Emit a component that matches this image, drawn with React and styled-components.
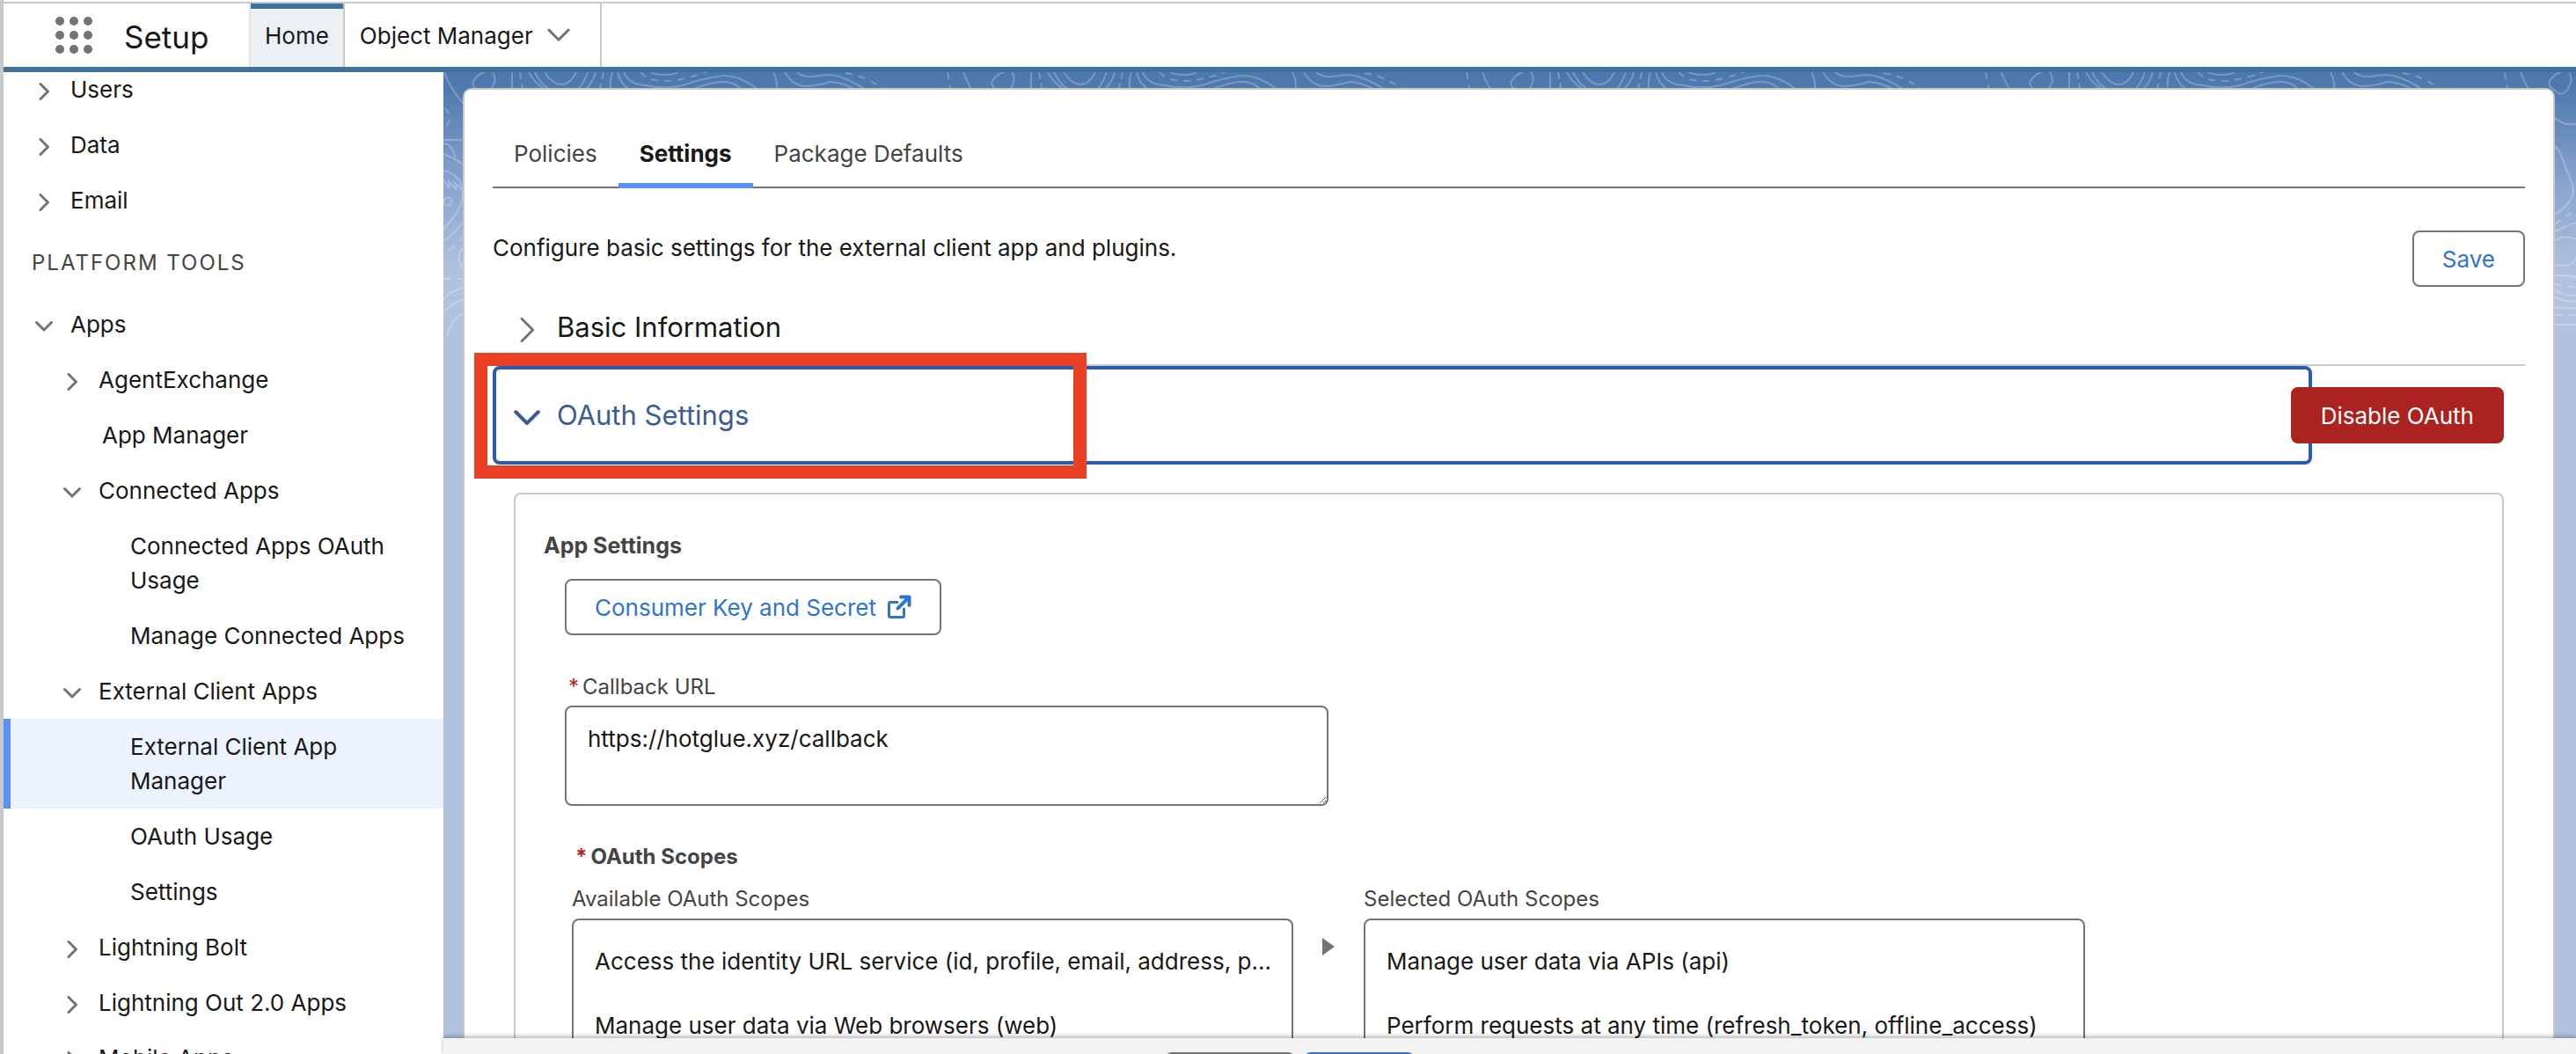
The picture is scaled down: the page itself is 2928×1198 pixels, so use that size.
import React from "react";
import styled, { createGlobalStyle, css } from "styled-components";

const GlobalStyle = createGlobalStyle`
  *, *::before, *::after { box-sizing: border-box; }
  body { margin: 0; background: #fff; }
  button, textarea { font: inherit; color: inherit; }
  ul { list-style: none; margin: 0; padding: 0; }
  h1, h2, h3, p { margin: 0; font-weight: 400; }
`;

const color = {
  text: "#181818",
  muted: "#444444",
  icon: "#747474",
  line: "#c9c9c9",
  header: "#3e729b",
  accent: "#5892f5",
  link: "#2f74d0",
  focus: "#2a5ca8",
};

const Shell = styled.div`
  display: flex;
  flex-direction: column;
  height: 100vh;
  overflow: hidden;
  padding-top: 2px;
  border-left: 4px solid ${color.line};
  font-family: Inter, "Liberation Sans", sans-serif;
  font-size: 26px;
  line-height: 39px;
  color: ${color.text};
`;

const Header = styled.header`
  display: flex;
  flex: none;
  height: 80px;
  border-top: 2px solid ${color.line};
  border-bottom: 6px solid ${color.header};
`;

const Launcher = styled.button`
  display: flex;
  align-items: center;
  padding: 0 36px 0 59px;
  border: 0;
  background: none;
`;

const AppName = styled.h1`
  width: 142px;
  font-size: 35px;
  line-height: 76px;
`;

const NavItem = styled.a`
  display: flex;
  align-items: center;
  gap: 16px;
  padding: 0 34px 0 17px;
  border-right: 2px solid ${color.line};
  color: inherit;
  text-decoration: none;
  ${(p) =>
    p.$active &&
    css`
      padding: 0 16px;
      border-left: 2px solid #e0e4e8;
      background: #ebf0f4;
      box-shadow: inset 0 6px ${color.header};
    `}
`;

const Body = styled.div`
  display: flex;
  flex: 1;
  min-height: 0;
`;

const Sidebar = styled.nav`
  flex: none;
  width: 500px;
  overflow: hidden;
  background: #fff;
`;

const Tree = styled.ul`
  margin-top: -12px;
`;

const TreeHeading = styled.li`
  padding: 20px 32px 19px;
  font-size: 24px;
  letter-spacing: 2px;
  color: ${color.muted};
`;

const TreeItem = styled.li`
  display: flex;
  padding: 12px 40px 12px ${(p) => p.$indent}px;
  background: ${(p) => (p.$selected ? "#ecf3fe" : "transparent")};
  box-shadow: ${(p) => (p.$selected ? `inset 8px 0 ${color.accent}` : "none")};
`;

const Toggle = styled.button`
  display: flex;
  align-items: center;
  justify-content: center;
  flex: none;
  width: 20px;
  height: 39px;
  margin-right: 20px;
  padding: 4px 0 0;
  border: 0;
  background: none;
`;

const TreeLink = styled.a`
  color: inherit;
  text-decoration: none;
`;

const Main = styled.main`
  position: relative;
  flex: 1;
  min-width: 0;
  display: flex;
  flex-direction: column;
  background: linear-gradient(#4d77ad 0, #507aaf 20px, #8aa5ce 130px, #b1c2df 230px);
`;

const Contours = styled.svg`
  position: absolute;
  inset: 0;
  width: 100%;
  height: 320px;
`;

const Scroller = styled.div`
  position: relative;
  flex: 1;
  min-height: 0;
  overflow: hidden;
  padding: 18px 24px 0 22px;
`;

const Card = styled.section`
  min-height: 1200px;
  padding: 40px 32px;
  border: 2px solid ${color.line};
  border-radius: 10px;
  background: #fff;
`;

const Tabs = styled.div`
  display: flex;
  border-bottom: 2px solid ${color.icon};
`;

const Tab = styled.button`
  margin-bottom: -2px;
  padding: 13px 24px 14px;
  border: 0;
  border-bottom: 6px solid ${(p) => (p.$active ? color.accent : "transparent")};
  background: none;
  color: ${(p) => (p.$active ? color.text : color.muted)};
  font-weight: ${(p) => (p.$active ? 700 : 400)};
`;

const Intro = styled.div`
  display: flex;
  justify-content: space-between;
  padding: 48px 0 22px;
`;

const Button = styled.button`
  display: inline-flex;
  align-items: center;
  flex: none;
  gap: 12px;
  height: 64px;
  padding: 0 32px;
  border: 2px solid ${color.icon};
  border-radius: 8px;
  background: #fff;
  color: ${color.link};
`;

const DangerButton = styled(Button)`
  margin-left: -24px;
  border-color: #aa2320;
  background: #aa2320;
  color: #fff;
`;

const SectionToggle = styled.button`
  display: flex;
  align-items: center;
  gap: 19px;
  padding: 0 24px;
  border: 0;
  border-radius: 8px;
  background: none;
  font-size: 31px;
  line-height: 48px;

  svg {
    margin-top: 6px;
  }

  ${(p) =>
    p.$focused &&
    css`
      flex: 1;
      height: 112px;
      padding: 0 20px;
      border: 4px solid ${color.focus};
      color: #3a5b96;
    `}
`;

const BasicRow = styled.div`
  padding-bottom: 18px;
  border-bottom: 2px solid ${color.line};
`;

const OauthRow = styled.div`
  position: relative;
  display: flex;
  align-items: center;
  padding-right: 24px;
`;

const Highlight = styled.div`
  position: absolute;
  top: -15px;
  left: -21px;
  width: 696px;
  height: 143px;
  border: 15px solid #ea4026;
  pointer-events: none;
`;

const Panel = styled.div`
  margin: 32px 24px 0;
  padding: 38px 32px;
  min-height: 720px;
  border: 2px solid ${color.line};
  border-radius: 8px;
`;

const PanelTitle = styled.h2`
  font-size: 25px;
  font-weight: 700;
  line-height: 40px;
  color: ${color.muted};
`;

const Fields = styled.div`
  padding: 18px 24px 0;
`;

const FieldLabel = styled.label`
  display: block;
  padding: 0 0 3px 4px;
  font-size: 24px;
  line-height: 36px;
  color: ${color.muted};
`;

const Required = styled.abbr`
  margin-right: 4px;
  color: #b3261e;
  text-decoration: none;
`;

const CallbackField = styled.div`
  margin-top: 41px;
`;

const UrlBox = styled.textarea`
  display: block;
  width: 100%;
  max-width: 868px;
  height: 114px;
  padding: 16px 24px;
  border: 2px solid ${color.icon};
  border-radius: 8px;
  background: #fff;
  outline: 0;
`;

const ScopesTitle = styled.h3`
  margin-top: 40px;
  padding-left: 12px;
  font-size: 24px;
  font-weight: 700;
  line-height: 36px;
  color: ${color.muted};
`;

const DuelingList = styled.div`
  display: grid;
  grid-template-columns: 820px 80px 820px;
  margin-top: 12px;
  padding-left: 8px;
`;

const ListLabel = styled.div`
  padding-bottom: 4px;
  font-size: 24px;
  line-height: 36px;
  color: ${color.muted};
`;

const ListBox = styled.ul`
  height: 400px;
  padding-top: 10px;
  border: 2px solid ${color.icon};
  border-radius: 8px;
`;

const Option = styled.li`
  padding: 17px 20px 17px 24px;
  overflow: hidden;
  white-space: nowrap;
  text-overflow: ellipsis;
`;

const MoveButton = styled.button`
  justify-self: center;
  align-self: start;
  display: flex;
  margin-top: 62px;
  padding: 0;
  border: 0;
  background: none;
`;

const Footer = styled.footer`
  position: relative;
  display: flex;
  justify-content: center;
  align-items: flex-start;
  gap: 10px;
  flex: none;
  height: 18px;
  padding: 16px 500px 0 0;
  background: #f3f3f3;
  box-shadow: 0 -2px 5px rgba(0, 0, 0, 0.3);
`;

const FooterButton = styled(Button)`
  width: ${(p) => (p.$primary ? 126 : 148)}px;
  padding: 0;
  justify-content: center;
  border-color: ${(p) => (p.$primary ? color.link : color.icon)};
  background: ${(p) => (p.$primary ? color.link : "#fff")};
`;

function Chevron({ open, size = 20, width = 3, stroke = color.icon }) {
  return (
    <svg
      width={size}
      height={size}
      viewBox="0 0 20 20"
      fill="none"
      stroke={stroke}
      strokeWidth={(width * 20) / size}
      strokeLinecap="round"
      strokeLinejoin="round"
      aria-hidden="true"
    >
      <path d={open ? "M1.5 5.5 L10 14 L18.5 5.5" : "M6 1.5 L14.5 10 L6 18.5"} />
    </svg>
  );
}

function Waffle() {
  const steps = [5, 21, 37];
  return (
    <svg width="42" height="42" fill={color.icon} aria-hidden="true">
      {steps.map((y) => steps.map((x) => <circle key={`${x}-${y}`} cx={x} cy={y} r="5" />))}
    </svg>
  );
}

function NewWindow() {
  return (
    <svg width="28" height="28" viewBox="0 0 28 28" fill="none" stroke={color.link} strokeWidth="3" aria-hidden="true">
      <path d="M12 8.500 H4 Q2.500 8.500 2.500 10 V24 Q2.500 25.500 4 25.500 H18 Q19.500 25.500 19.500 24 V16" strokeLinecap="round" />
      <path d="M12.500 15.500 L24 4" strokeWidth="4" strokeLinecap="round" />
      <path d="M16 2.500 H25.500 V12" strokeWidth="4" strokeLinecap="round" strokeLinejoin="round" />
    </svg>
  );
}

function ContourLines() {
  return (
    <Contours aria-hidden="true">
      <defs>
        <pattern id="contours" width="590" height="320" patternUnits="userSpaceOnUse">
          <g fill="none" stroke="#fff" strokeOpacity="0.24" strokeWidth="2">
            <path d="M44 1 Q51 -3 56 0 Q60 6 58 12 Q53 25 46 25 Q41 22 36 18 Q32 14 34 10 Q38 4 44 1 Z" />
            <path d="M1 0 Q6 16 22 35 Q40 56 53 59 Q60 60 70 58" />
            <path d="M40 84 Q47 91 51 105 L60 128 Q63 138 56 148 Q50 155 40 162" />
            <path d="M40 181 Q52 175 64 171 M40 191 Q52 184 64 190 M64 211 Q60 221 50 220 L40 219" />
            <path d="M40 231 Q54 231 64 233 M40 248 Q50 254 64 254 M40 256 Q50 261 64 261 M40 267 L64 269 M40 287 H64" />
            <path d="M40 173 Q52 164 64 157 M40 241 L64 245 M40 276 H64" strokeDasharray="8 7" />
            <path d="M1 41 Q8 46 7 53 Q6 60 1 63 M0 235 H24" strokeDasharray="8 7" />
            <path d="M0 77 H24 M0 81 Q11 82 13 97 M0 93 Q14 98 24 107" />
            <path d="M0 112 Q22 116 22 141 Q18 162 0 178 M0 122 L7 132 L6 124 L15 134 L13 126 L22 135" />
            <circle cx="5" cy="147" r="4.500" />
            <path d="M24 168 Q14 183 0 192 M24 198 Q12 210 22 222 M24 245 Q10 247 0 258 M24 258 Q10 262 0 273 M24 274 Q8 280 4 300" />
            <path d="M24 187 Q12 198 2 206" strokeDasharray="8 7" />
            <path d="M78 0 V20 M97 0 Q103 12 116 20 M104 0 Q109 12 121 20 M115 0 Q124 14 134 14 Q144 14 151 0" />
            <path d="M164 0 Q160 12 153 20 M173 0 Q170 12 161 20 M192 0 Q189 8 190 20 M198 0 Q200 12 212 20" />
            <path d="M87 0 L90 18 M182 0 L178 18" strokeDasharray="8 5" />
            <path d="M205 0 Q210 14 230 15 Q250 20 272 15 Q298 6 318 4 Q338 4 358 20" />
            <path d="M236 0 Q240 3 252 3 Q262 3 266 0 M282 20 Q306 10 321 11 Q332 12 339 20" />
            <path d="M224 0 Q232 10 252 10 Q272 10 300 -1" strokeDasharray="8 7" />
            <path d="M375 0 Q380 10 379 20 M388 0 Q396 14 409 16 Q424 16 440 11 Q456 12 468 20" />
            <path d="M402 0 Q408 6 421 5 Q434 2 446 4 Q462 8 480 20" />
            <path d="M457 1 Q478 4 500 19 M573 0 L576 18" strokeDasharray="8 7" />
          </g>
        </pattern>
      </defs>
      <rect width="100%" height="320" fill="url(#contours)" />
    </Contours>
  );
}

const topItems = [{ label: "Users" }, { label: "Data" }, { label: "Email" }];

const platformItems = [
  { label: "Apps", open: true },
  { label: "AgentExchange", level: 1 },
  { label: "App Manager", level: 2 },
  { label: "Connected Apps", level: 1, open: true },
  { label: "Connected Apps OAuth Usage", level: 3 },
  { label: "Manage Connected Apps", level: 3 },
  { label: "External Client Apps", level: 1, open: true },
  { label: "External Client App Manager", level: 3, selected: true },
  { label: "OAuth Usage", level: 3 },
  { label: "Settings", level: 3 },
  { label: "Lightning Bolt", level: 1 },
  { label: "Lightning Out 2.0 Apps", level: 1 },
  { label: "Mobile Apps", level: 1 },
];

const indents = [36, 68, 112, 144];

function TreeRow({ item }) {
  const level = item.level || 0;
  return (
    <TreeItem $indent={indents[level]} $selected={item.selected}>
      {level < 2 && (
        <Toggle aria-label={item.label} aria-expanded={!!item.open}>
          <Chevron open={item.open} />
        </Toggle>
      )}
      <TreeLink href="#">{item.label}</TreeLink>
    </TreeItem>
  );
}

const available = [
  "Access the identity URL service (id, profile, email, address, phone)",
  "Manage user data via Web browsers (web)",
];
const selected = ["Manage user data via APIs (api)", "Perform requests at any time (refresh_token, offline_access)"];

function ScopeList({ label, options }) {
  return (
    <div>
      <ListLabel>{label}</ListLabel>
      <ListBox role="listbox" aria-label={label}>
        {options.map((o) => (
          <Option key={o} role="option" aria-selected="false">
            {o}
          </Option>
        ))}
      </ListBox>
    </div>
  );
}

export default function App() {
  return (
    <Shell>
      <GlobalStyle />
      <Header>
        <Launcher aria-label="App Launcher">
          <Waffle />
        </Launcher>
        <AppName>Setup</AppName>
        <NavItem href="#" $active>
          Home
        </NavItem>
        <NavItem href="#">
          Object Manager
          <Chevron open size={26} />
        </NavItem>
      </Header>
      <Body>
        <Sidebar>
          <Tree>
            {topItems.map((i) => (
              <TreeRow key={i.label} item={i} />
            ))}
            <TreeHeading>PLATFORM TOOLS</TreeHeading>
            {platformItems.map((i) => (
              <TreeRow key={i.label} item={i} />
            ))}
          </Tree>
        </Sidebar>
        <Main>
          <ContourLines />
          <Scroller>
            <Card>
              <Tabs role="tablist">
                <Tab role="tab">Policies</Tab>
                <Tab role="tab" aria-selected="true" $active>
                  Settings
                </Tab>
                <Tab role="tab">Package Defaults</Tab>
              </Tabs>
              <Intro>
                <p>Configure basic settings for the external client app and plugins.</p>
                <Button>Save</Button>
              </Intro>
              <BasicRow>
                <SectionToggle aria-expanded="false">
                  <Chevron size={30} />
                  Basic Information
                </SectionToggle>
              </BasicRow>
              <OauthRow>
                <SectionToggle aria-expanded="true" $focused>
                  <Chevron open size={30} width={4} stroke="#3a5b96" />
                  OAuth Settings
                </SectionToggle>
                <DangerButton>Disable OAuth</DangerButton>
                <Highlight />
              </OauthRow>
              <Panel>
                <PanelTitle>App Settings</PanelTitle>
                <Fields>
                  <Button>
                    Consumer Key and Secret
                    <NewWindow />
                  </Button>
                  <CallbackField>
                    <FieldLabel htmlFor="callback">
                      <Required title="required">*</Required>
                      Callback URL
                    </FieldLabel>
                    <UrlBox id="callback" defaultValue="https://hotglue.xyz/callback" spellCheck={false} />
                  </CallbackField>
                  <ScopesTitle>
                    <Required title="required">*</Required>
                    OAuth Scopes
                  </ScopesTitle>
                  <DuelingList>
                    <ScopeList label="Available OAuth Scopes" options={available} />
                    <MoveButton aria-label="Move to selected">
                      <svg width="14" height="20" fill={color.icon} aria-hidden="true">
                        <path d="M0 0 L14 10 L0 20 Z" />
                      </svg>
                    </MoveButton>
                    <ScopeList label="Selected OAuth Scopes" options={selected} />
                  </DuelingList>
                </Fields>
              </Panel>
            </Card>
          </Scroller>
          <Footer>
            <FooterButton aria-label="Cancel" />
            <FooterButton $primary aria-label="Save" />
          </Footer>
        </Main>
      </Body>
    </Shell>
  );
}
